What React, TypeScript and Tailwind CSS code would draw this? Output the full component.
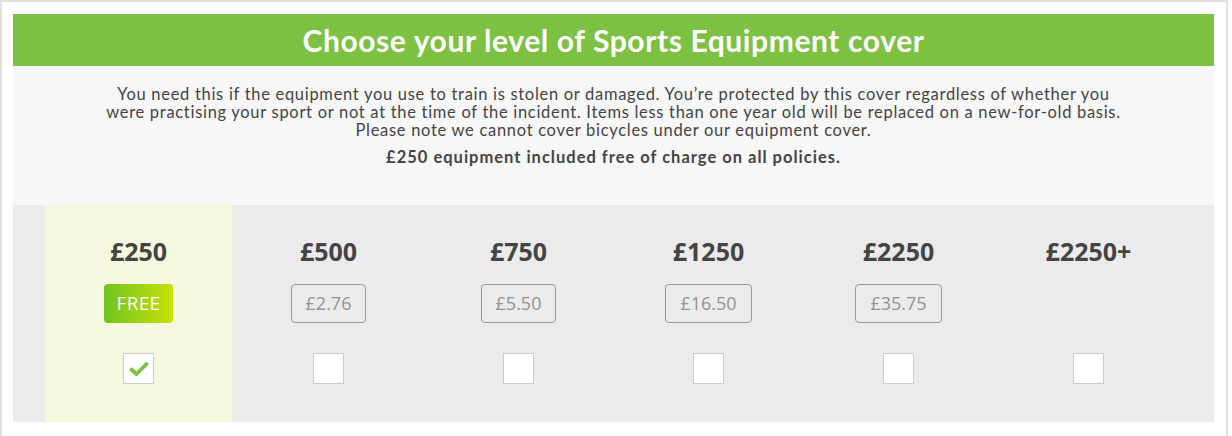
const levels = [
  { amount: "£250", price: "FREE", selected: true },
  { amount: "£500", price: "£2.76" },
  { amount: "£750", price: "£5.50" },
  { amount: "£1250", price: "£16.50" },
  { amount: "£2250", price: "£35.75" },
  { amount: "£2250+", price: null },
];

const Check = () => (
  <svg width="20" height="16" viewBox="0 0 20 16" fill="none">
    <path d="M2.5 8.5 L7.5 13 L17.5 3" stroke="#7dc142" strokeWidth="3.8" strokeLinecap="round" strokeLinejoin="round" />
  </svg>
);

const App = () => {
  return (
    <div className="w-[1228px] h-[436px] border-2 border-b-0 border-[#e0e0e0] bg-white pt-[12px] pl-[11px] pr-[12px]">
      {/* Header */}
      <div className="h-[52px] bg-[#7dc142] flex items-center justify-center">
        <h1 className="text-white text-[30px] tracking-[0.6px] font-bold font-['Lato',sans-serif] leading-none">
          Choose your level of Sports Equipment cover
        </h1>
      </div>

      {/* Description */}
      <div className="h-[139px] bg-[#f7f7f7] pt-[19px] text-center text-[#444] font-['Lato',sans-serif]">
        <p className="text-[16.5px] tracking-[0.7px] leading-[18px]">
          You need this if the equipment you use to train is stolen or damaged. You’re protected by this cover regardless of whether you
          <br />
          were practising your sport or not at the time of the incident. Items less than one year old will be replaced on a new-for-old basis.
          <br />
          Please note we cannot cover bicycles under our equipment cover.
        </p>
        <p className="mt-[9px] text-[16.5px] tracking-[1px] leading-[18px] font-bold">
          £250 equipment included free of charge on all policies.
        </p>
      </div>

      {/* Options */}
      <div className="h-[217px] bg-[#ebebeb] px-[32px] grid grid-cols-6 gap-x-[3px] font-['Open_Sans',sans-serif]">
        {levels.map((level) => (
          <div
            key={level.amount}
            className={`flex flex-col items-center pt-[29px] ${level.selected ? "bg-[#f5f8df]" : ""}`}
          >
            <div className="text-[25px] leading-[34px] font-bold text-[#444]">{level.amount}</div>
            <div className="mt-[16px] h-[39px]">
              {level.price === "FREE" ? (
                <div className="h-[39px] px-[13px] flex items-center rounded-[4px] bg-gradient-to-r from-[#6cc51f] to-[#c7e000] text-white text-[19px] tracking-[0.3px]">
                  FREE
                </div>
              ) : level.price ? (
                <div className="h-[39px] px-[14px] flex items-center rounded-[4px] border border-[#999] text-[#939393] text-[18px]">
                  {level.price}
                </div>
              ) : null}
            </div>
            <div className="mt-[30px] w-[31px] h-[31px] bg-white border border-[#ccc] flex items-center justify-center">
              {level.selected && <Check />}
            </div>
          </div>
        ))}
      </div>
    </div>
  );
};

export default App;
